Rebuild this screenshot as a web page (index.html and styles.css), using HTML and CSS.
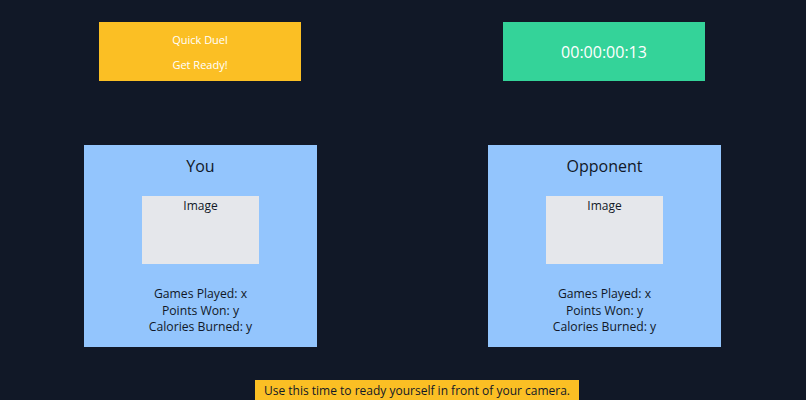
FILE: index.html
```html
<!DOCTYPE html>
<html>
<head>
<meta charset="utf-8">
<link rel="stylesheet" href="styles.css">
</head>
<body>
<div class="page">
  <div class="row top">
    <div class="status">
      <p>Quick Duel</p>
      <p>Get Ready!</p>
    </div>
    <div class="timer">00:00:00:13</div>
  </div>
  <div class="row players">
    <div class="card">
      <h2 class="name">You</h2>
      <div class="image">Image</div>
      <div class="stats">
        <p>Games Played: x</p>
        <p>Points Won: y</p>
        <p>Calories Burned: y</p>
      </div>
    </div>
    <div class="card">
      <h2 class="name">Opponent</h2>
      <div class="image">Image</div>
      <div class="stats">
        <p>Games Played: x</p>
        <p>Points Won: y</p>
        <p>Calories Burned: y</p>
      </div>
    </div>
  </div>
  <div class="notice-wrap">
    <div class="notice">Use this time to ready yourself in front of your camera.</div>
  </div>
</div>
</body>
</html>
```
FILE: styles.css
```css
html, body {
  margin: 0;
  padding: 0;
  background: #111827;
  font-family: "Open Sans", "Noto Sans", sans-serif;
}
.page {
  width: 806px;
  height: 400px;
  overflow: hidden;
  padding-top: 22px;
  box-sizing: border-box;
}
.row {
  display: flex;
}
.top {
  padding-left: 99px;
  gap: 202px;
}
.status {
  width: 202px;
  height: 59px;
  background: #fbbf24;
  color: #fff;
  display: flex;
  flex-direction: column;
  justify-content: center;
  align-items: center;
  gap: 10px;
  font-size: 11px;
}
.status p {
  margin: 0;
  line-height: 15px;
}
.timer {
  width: 202px;
  height: 59px;
  background: #34d399;
  color: #fff;
  display: flex;
  justify-content: center;
  align-items: center;
  font-size: 16px;
}
.players {
  margin-top: 64px;
  padding-left: 84px;
  gap: 171px;
}
.card {
  width: 233px;
  height: 202px;
  background: #93c5fd;
  color: #111827;
  display: flex;
  flex-direction: column;
  align-items: center;
  box-sizing: border-box;
  padding-top: 11px;
}
.name {
  margin: 0;
  font-size: 16px;
  font-weight: 400;
  line-height: 20px;
}
.image {
  margin-top: 20px;
  width: 117px;
  height: 68px;
  background: #e5e7eb;
  font-size: 12px;
  text-align: center;
  line-height: 20px;
}
.stats {
  margin-top: 22px;
  text-align: center;
  font-size: 12.2px;
}
.stats p {
  margin: 0;
  line-height: 16.5px;
}
.notice-wrap {
  display: flex;
  justify-content: center;
  padding-left: 28px;
  margin-top: 33px;
}
.notice {
  background: #fbbf24;
  color: #111827;
  font-size: 12px;
  padding: 3px 9px;
  line-height: 16px;
}
```
